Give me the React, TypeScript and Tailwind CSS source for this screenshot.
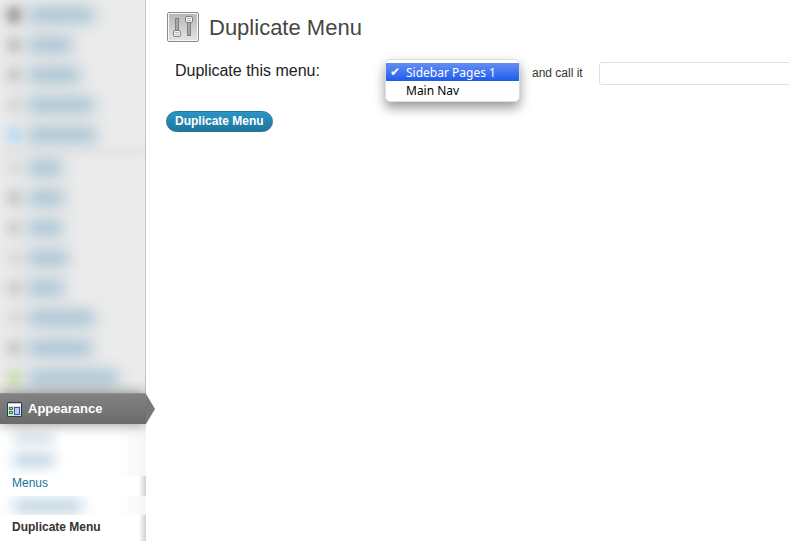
import { useState } from "react";

type Entry = { icon: string; label: string };

const topEntries: Entry[] = [
  { icon: "bg-[#7c7c7c]", label: "w-[66px]" },
  { icon: "bg-[#b4b4b4]", label: "w-[44px]" },
  { icon: "bg-[#bebebe]", label: "w-[52px]" },
  { icon: "bg-[#d0d0d0]", label: "w-[66px]" },
  { icon: "bg-[#a9d3f5]", label: "w-[68px]" },
];

const contentEntries: Entry[] = [
  { icon: "bg-[#d8d8d8]", label: "w-[34px]" },
  { icon: "bg-[#bcbcbc]", label: "w-[36px]" },
  { icon: "bg-[#c6c6c6]", label: "w-[34px]" },
  { icon: "bg-[#d6d6d6]", label: "w-[40px]" },
  { icon: "bg-[#c4c4c4]", label: "w-[36px]" },
  { icon: "bg-[#d6d6d6]", label: "w-[66px]" },
  { icon: "bg-[#bcbcbc]", label: "w-[64px]" },
  { icon: "bg-[#bcdb92]", label: "w-[90px]" },
];

const menus = ["Sidebar Pages 1", "Main Nav"];

function BlurredEntry({ icon, label }: Entry) {
  return (
    <li className="flex h-[30px] items-center gap-2 pl-2">
      <span className={`h-[14px] w-3 blur-[6px] ${icon}`} />
      <span className={`h-3 bg-[#90b6ca] blur-[8px] ${label}`} />
    </li>
  );
}

function AppearanceIcon() {
  return (
    <svg width="15" height="15" viewBox="0 0 15 15" aria-hidden="true">
      <rect width="15" height="15" rx="1.5" fill="#2d3c50" />
      <rect x="1" y="1" width="13" height="1" fill="#c9cdd2" />
      <rect x="1" y="2" width="13" height="2" fill="#ffffff" />
      <rect x="1" y="4" width="13" height="10" fill="#c4ecec" />
      <rect x="2.5" y="5.5" width="3" height="2" fill="#b4dc6c" stroke="#4b8034" />
      <rect x="2.5" y="9.5" width="3" height="2" fill="#b4dc6c" stroke="#4b8034" />
      <rect x="7.5" y="5.5" width="5" height="7" fill="#c3c3f4" stroke="#4d4fa4" />
    </svg>
  );
}

function SlidersIcon() {
  return (
    <svg width="32" height="32" viewBox="0 0 32 32" aria-hidden="true">
      <defs>
        <linearGradient id="plate" x1="0" y1="0" x2="0" y2="1">
          <stop offset="0" stopColor="#b8b8b8" />
          <stop offset="1" stopColor="#e2e2e2" />
        </linearGradient>
      </defs>
      <rect x="0.5" y="0.5" width="31" height="29" rx="1.5" fill="#f8f8f8" stroke="#8a8a8a" />
      <rect x="2" y="2" width="28" height="26" fill="url(#plate)" />
      <rect x="8.5" y="6.5" width="3" height="14" fill="#a6a6a6" stroke="#808080" />
      <rect x="20.5" y="9.5" width="3" height="14" fill="#a6a6a6" stroke="#808080" />
      <rect x="6.5" y="18.5" width="7" height="6" rx="1.5" fill="#f6f6f6" stroke="#808080" />
      <path d="M8 20.5h4M8 22.5h4" stroke="#b8b8b8" />
      <rect x="18.5" y="4.5" width="7" height="6" rx="1.5" fill="#f6f6f6" stroke="#808080" />
      <path d="M20 6.5h4M20 8.5h4" stroke="#b8b8b8" />
    </svg>
  );
}

function Sidebar() {
  return (
    <nav className="w-[146px] shrink-0 bg-white text-xs">
      <div className="overflow-hidden border-r border-[#c6c6c6] bg-[#ebebeb]">
        <ul aria-hidden="true">
          {topEntries.map((entry, i) => (
            <BlurredEntry key={i} {...entry} />
          ))}
        </ul>
        <div className="h-[3px] bg-[#dadada] blur-[4px]" />
        <ul aria-hidden="true">
          {contentEntries.map((entry, i) => (
            <BlurredEntry key={i} {...entry} />
          ))}
        </ul>
      </div>

      <div className="relative z-10">
        <a
          href="#appearance"
          className="flex h-[31px] items-center gap-[6px] border-t border-[#909090] bg-linear-to-b from-[#828282] to-[#6b6b6b] pl-[7px] text-[13px] font-bold text-white shadow-[0_0_14px_rgba(0,0,0,0.45)] [clip-path:inset(-12px_0_-18px_0)]"
        >
          <AppearanceIcon />
          Appearance
        </a>
        <svg
          className="absolute top-px left-full"
          width="9"
          height="30"
          viewBox="0 0 9 30"
          aria-hidden="true"
        >
          <path d="M0 0L9 15L0 30Z" fill="#777777" />
        </svg>
      </div>

      <div
        className="flex h-[52px] flex-col gap-3 overflow-hidden bg-linear-to-r from-white from-80% to-[#f6f6f6] pt-[10px] pl-[14px]"
        aria-hidden="true"
      >
        <span className="h-2 w-10 bg-[#c4d6e0] blur-[6px]" />
        <span className="h-3 w-10 bg-[#b4cddb] blur-[7px]" />
      </div>
      <a
        href="#menus"
        className="block h-5 bg-linear-to-r from-white from-95% to-[#d0d0d0] pl-3 leading-[14px] text-[#21759b]"
      >
        Menus
      </a>
      <div
        className="h-[19px] overflow-hidden bg-linear-to-r from-white from-80% to-[#f6f6f6] pt-1 pl-[14px]"
        aria-hidden="true"
      >
        <span className="block h-3 w-[68px] bg-[#b4cddb] blur-[7px]" />
      </div>
      <a
        href="#duplicate-menu"
        className="block h-[26px] bg-linear-to-r from-white from-95% to-[#d0d0d0] pl-3 leading-6 font-bold text-[#333333]"
      >
        Duplicate Menu
      </a>
    </nav>
  );
}

function MenuSelect() {
  const [selected, setSelected] = useState(menus[0]);

  return (
    <select
      id="source"
      size={2}
      value={selected}
      onChange={(e) => setSelected(e.target.value)}
      className="h-[43px] w-[135px] shrink-0 appearance-none overflow-hidden rounded-[5px] border border-[#dddddd] bg-white py-[3px] font-['Noto_Sans',sans-serif] text-[12px] font-medium text-black shadow-[0_6px_12px_rgba(0,0,0,0.4)] outline-none"
    >
      {menus.map((name) => (
        <option
          key={name}
          value={name}
          className="flex h-[18px] min-h-0 items-center p-0 leading-[18px] before:w-5 before:pl-1 before:font-['DejaVu_Sans'] before:font-bold before:content-[''] checked:bg-linear-to-b checked:from-[#648df3] checked:to-[#1c5bee] checked:text-white checked:before:content-['✔']"
        >
          {name}
        </option>
      ))}
    </select>
  );
}

export default function App() {
  return (
    <div className="flex min-h-screen overflow-hidden bg-white font-['Liberation_Sans',Arial,sans-serif] text-[#333333]">
      <Sidebar />

      <main className="min-w-0 flex-1 pt-3 pl-5">
        <header className="flex h-8 items-center gap-[10px] pl-px">
          <SlidersIcon />
          <h1 className="text-[22px] leading-8 text-[#464646]">Duplicate Menu</h1>
        </header>

        <form className="pt-[15px]" onSubmit={(e) => e.preventDefault()}>
          <div className="flex items-start pl-[9px]">
            <label htmlFor="source" className="w-[210px] shrink-0 text-base leading-6 text-[#222222]">
              Duplicate this menu:
            </label>
            <MenuSelect />
            <label htmlFor="name" className="shrink-0 px-3 pt-[2px] pr-4 text-xs leading-6">
              and call it
            </label>
            <input
              id="name"
              type="text"
              className="mt-[3px] h-[23px] w-full min-w-[200px] rounded-[3px] border border-[#dfdfdf] bg-white px-1 text-xs outline-none"
            />
          </div>
          <button
            type="submit"
            className="mt-[9px] block h-[21px] rounded-full border border-[#21759b] bg-linear-to-b from-[#2a95c5] to-[#21759b] px-2 text-xs leading-[19px] font-bold text-white"
          >
            Duplicate Menu
          </button>
        </form>
      </main>
    </div>
  );
}
